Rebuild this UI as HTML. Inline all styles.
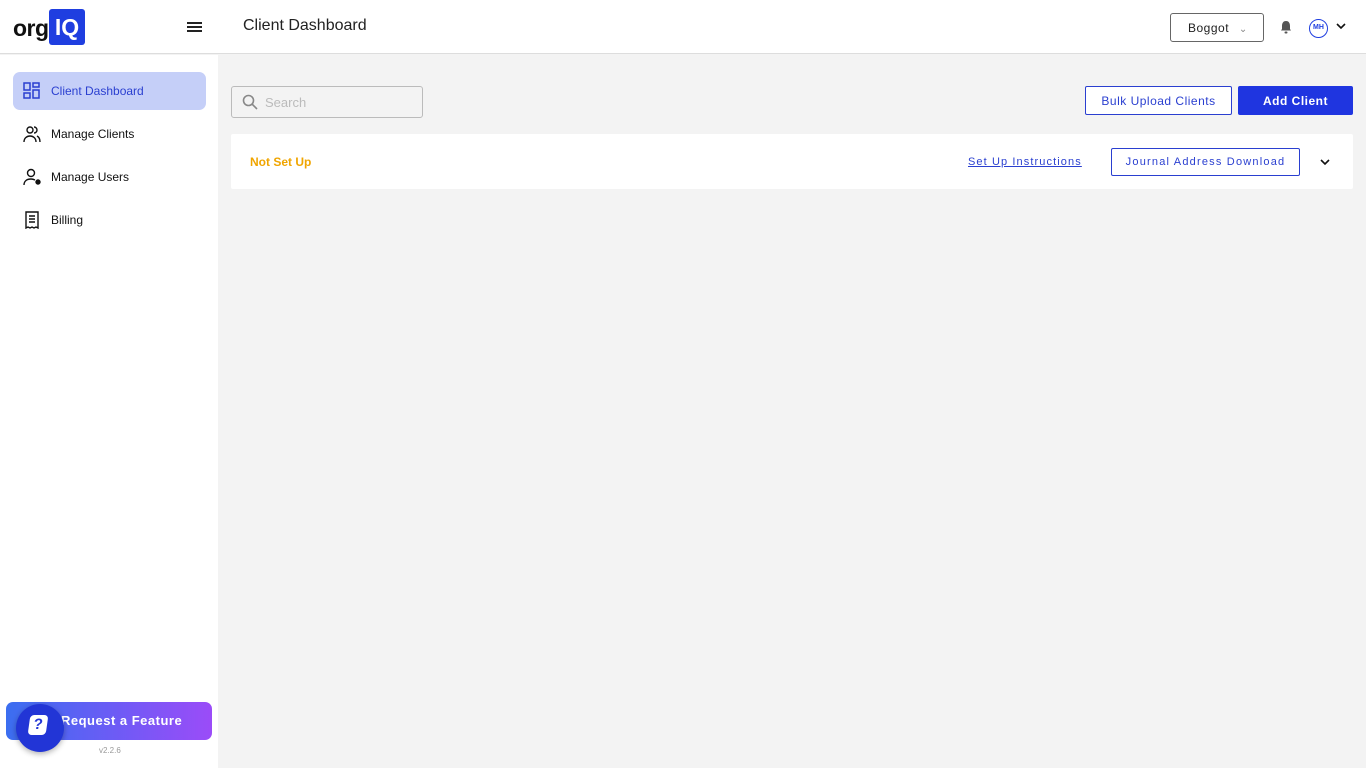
<!DOCTYPE html>
<html><head><meta charset="utf-8"><style>
*{box-sizing:border-box;margin:0;padding:0}
body{width:1366px;height:768px;overflow:hidden;background:#f3f3f3;font-family:"Liberation Sans",sans-serif;position:relative}
.top{position:absolute;left:0;top:0;width:1366px;height:54px;background:#fff;border-bottom:1px solid #ddd}
.side{position:absolute;left:0;top:55px;width:218px;height:713px;background:#fff}
.abs{position:absolute}
.nav{position:absolute;left:13px;width:193px;height:38px;border-radius:7px;font-size:12px;color:#111;display:flex;align-items:center;padding-left:38px}
.nav svg{position:absolute;left:10px;top:10px}
.btn{position:absolute;font-size:12px;letter-spacing:.5px;display:flex;align-items:center;justify-content:center;border-radius:2px}
</style></head><body>
<div class="top">
 <div class="abs" style="left:13px;top:15px;font-size:23px;font-weight:bold;color:#111;letter-spacing:-0.5px">org</div>
 <div class="abs" style="left:49px;top:9px;width:36px;height:36px;background:#1f3ee0;border-radius:3px;color:#fff;font-weight:bold;font-size:23px;line-height:36px;text-align:center">IQ</div>
 <div class="abs" style="left:187px;top:22px;width:15px;height:2px;background:#222;box-shadow:0 4px 0 #222,0 8px 0 #222"></div>
 <div class="abs" style="left:243px;top:17px;font-size:16px;color:#222">Client Dashboard</div>
 <div class="abs" style="left:1170px;top:13px;width:94px;height:29px;border:1px solid #666;border-radius:3px;font-size:12px;color:#222;padding:7px 0 0 17px;letter-spacing:.5px">Boggot <span style="color:#888;margin-left:6px;font-size:10px">&#8964;</span></div>
 <svg class="abs" style="left:1279px;top:20px" width="14" height="14" viewBox="0 0 14 14"><path d="M7 1c-3 0-4 2.5-4 5v3L2 10.5h10L11 9V6c0-2.5-1-5-4-5z" fill="#555"/><rect x="5.5" y="11.5" width="3" height="2" rx="1" fill="#555"/></svg>
 <div class="abs" style="left:1309px;top:19px;width:19px;height:19px;border:1.5px solid #1f3ee0;border-radius:50%;font-size:7px;color:#1f3ee0;font-weight:bold;text-align:center;line-height:16px">MH</div>
 <svg class="abs" style="left:1336px;top:22px" width="10" height="8"><path d="M1 2l4 4 4-4" stroke="#111" stroke-width="1.6" fill="none"/></svg>
</div>
<div class="side">
 <div class="nav" style="top:17px;background:#c5cff8;color:#2a3fd0">Client Dashboard
  <svg width="18" height="18" viewBox="0 0 18 18" fill="none" stroke="#2a3fd0" stroke-width="1.5"><rect x="1" y="1" width="6" height="7"/><rect x="1" y="11" width="6" height="5"/><rect x="10" y="1" width="6" height="4"/><rect x="10" y="8" width="6" height="8"/></svg></div>
 <div class="nav" style="top:60px">Manage Clients
  <svg width="18" height="18" viewBox="0 0 18 18" fill="none" stroke="#111" stroke-width="1.4"><circle cx="7" cy="5" r="3"/><path d="M1 17c0-4 3-6 6-6s6 2 6 6"/><path d="M11 2a3 3 0 010 6M14 11c2 1 3 3 3 6"/></svg></div>
 <div class="nav" style="top:103px">Manage Users
  <svg width="20" height="18" viewBox="0 0 20 18" fill="none" stroke="#111" stroke-width="1.4"><circle cx="8" cy="5" r="3.5"/><path d="M1 17c0-4 3-6 7-6 2 0 3 .5 4 1"/><circle cx="15" cy="14" r="2" fill="#111"/></svg></div>
 <div class="nav" style="top:146px">Billing
  <svg width="18" height="18" viewBox="0 0 18 18" fill="none" stroke="#111" stroke-width="1.4"><path d="M3 1h12v16l-2-1-2 1-2-1-2 1-2-1-2 1z"/><path d="M6 5h6M6 8h6M6 11h6"/></svg></div>
 <div class="abs" style="left:6px;top:647px;width:206px;height:38px;border-radius:7px;background:linear-gradient(90deg,#3b6ef0,#6a5cf5 50%,#9b4cf8);color:#fff;font-weight:bold;font-size:13px;letter-spacing:.5px;padding:11px 0 0 55px">Request a Feature</div>
 <div class="abs" style="left:16px;top:649px;width:48px;height:48px;border-radius:50%;background:#2235d6;box-shadow:0 2px 6px rgba(0,0,0,.3)"><div style="position:absolute;left:13px;top:11px;width:18px;height:20px;background:#fff;border-radius:4px;transform:skewX(-8deg);color:#2235d6;font-weight:bold;font-size:15px;text-align:center;line-height:20px">?</div></div>
 <div class="abs" style="left:99px;top:691px;font-size:8px;color:#999">v2.2.6</div>
</div>
<div class="abs" style="left:231px;top:86px;width:192px;height:32px;border:1px solid #bbb;border-radius:3px;background:#f3f3f3"></div>
<svg class="abs" style="left:242px;top:94px" width="16" height="16" viewBox="0 0 16 16" fill="none" stroke="#888" stroke-width="1.6"><circle cx="6.5" cy="6.5" r="5"/><path d="M10 10l5 5"/></svg>
<div class="abs" style="left:265px;top:95px;font-size:13px;color:#bbb">Search</div>
<div class="btn" style="left:1085px;top:86px;width:147px;height:29px;border:1px solid #2a3fd0;color:#2a3fd0;background:#fff">Bulk Upload Clients</div>
<div class="btn" style="left:1238px;top:86px;width:115px;height:29px;background:#1f35e0;color:#fff;font-weight:bold">Add Client</div>
<div class="abs" style="left:231px;top:134px;width:1122px;height:55px;background:#fff;border-radius:2px"></div>
<div class="abs" style="left:250px;top:155px;font-size:12px;font-weight:bold;color:#f0a500">Not Set Up</div>
<div class="abs" style="left:968px;top:156px;font-size:11px;color:#2a3fd0;text-decoration:underline;letter-spacing:1.1px">Set Up Instructions</div>
<div class="btn" style="left:1111px;top:148px;width:189px;height:28px;border:1px solid #2a3fd0;color:#2a3fd0;font-size:11px;letter-spacing:1.2px">Journal Address Download</div>
<svg class="abs" style="left:1320px;top:158px" width="10" height="8"><path d="M1 2l4 4 4-4" stroke="#111" stroke-width="1.6" fill="none"/></svg>
</body></html>
